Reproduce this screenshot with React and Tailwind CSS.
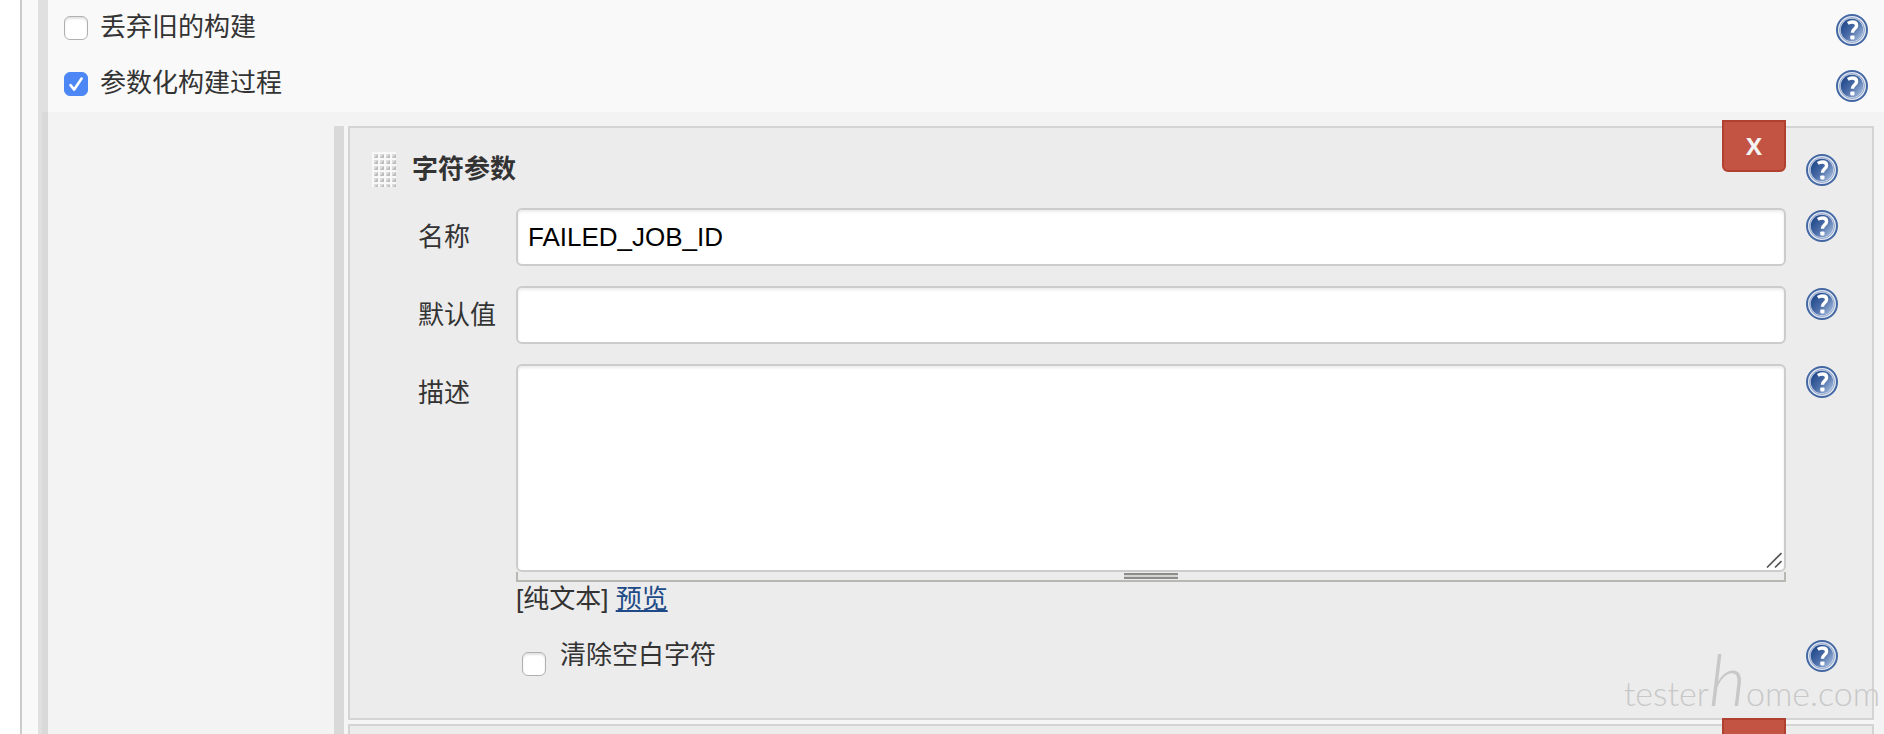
import { useState } from 'react'

function HelpIcon() {
  return (
    <svg viewBox="0 0 32 32" className="h-8 w-8" aria-hidden>
      <defs>
        <linearGradient id="helpFill" x1="0.1" y1="0.2" x2="0.9" y2="0.9">
          <stop stopColor="#234a8c" />
          <stop offset="0.5" stopColor="#4c6ea8" />
          <stop offset="1" stopColor="#a3bbdd" />
        </linearGradient>
      </defs>
      <circle cx="16" cy="16" r="15" fill="#e3e9f3" stroke="#4468a4" strokeWidth="2" />
      <circle cx="16" cy="16" r="12.400" fill="none" stroke="#8ba1c8" strokeWidth="1" />
      <circle cx="16" cy="16" r="11.300" fill="url(#helpFill)" />
      <path
        d="M11.800 9.400c1.400-.9 2.900-1.400 4.500-1.400 2.700 0 4.300 1.300 4.300 3.400 0 3.300-4.200 3.400-4.200 7.400"
        fill="none"
        stroke="#fff"
        strokeWidth="3.400"
      />
      <rect x="14.300" y="21.400" width="4.200" height="4" rx="0.800" fill="#fff" />
    </svg>
  )
}

function HelpButton({ label, className }) {
  return (
    <button type="button" aria-label={`帮助: ${label}`} className={`h-8 w-8 shrink-0 ${className}`}>
      <HelpIcon />
    </button>
  )
}

function Checkbox({ id, checked, onChange, className = '' }) {
  return (
    <span className={`relative h-6 w-6 shrink-0 ${className}`}>
      <input
        id={id}
        type="checkbox"
        checked={checked}
        onChange={(e) => onChange(e.target.checked)}
        className="peer block h-6 w-6 appearance-none rounded-md border border-[#b0b0b0] bg-white shadow-[inset_0_2px_2px_#e2e2e2] checked:border-[#4c87f5] checked:bg-[#4c87f5] checked:shadow-none"
      />
      <svg
        viewBox="0 0 24 24"
        className="pointer-events-none absolute inset-0 hidden h-6 w-6 peer-checked:block"
        fill="none"
        stroke="#fff"
        strokeWidth="2.600"
        strokeLinecap="round"
        strokeLinejoin="round"
        aria-hidden
      >
        <path d="M6.500 13.200 L10.200 17.600 L17.600 6.600" />
      </svg>
    </span>
  )
}

function OptionRow({ id, label, checked, onChange }) {
  return (
    <div className="flex h-14 items-start pr-4 pl-4">
      <Checkbox id={id} checked={checked} onChange={onChange} className="mt-4" />
      <label htmlFor={id} className="mt-2 ml-3 flex-1 leading-[38px]">
        {label}
      </label>
      <HelpButton label={label} className="mt-[14px]" />
    </div>
  )
}

function Field({ id, label, children }) {
  return (
    <div className="flex items-start">
      <label htmlFor={id} className="w-[98px] shrink-0 leading-[58px]">
        {label}
      </label>
      <div className="min-w-0 flex-1">{children}</div>
      <HelpButton label={label} className="mt-0.5 ml-5" />
    </div>
  )
}

function DragHandle() {
  return (
    <svg className="h-[35px] w-6 shrink-0" aria-hidden>
      <defs>
        <pattern id="gripDots" width="6" height="6" patternUnits="userSpaceOnUse">
          <rect width="6" height="6" fill="#f8f8f8" />
          <rect x="2" y="2" width="4" height="4" fill="#dcdcdc" />
          <path d="M2 6 L6 2 V6 Z" fill="#bdbdbd" />
        </pattern>
      </defs>
      <rect width="24" height="35" fill="url(#gripDots)" />
    </svg>
  )
}

function DeleteButton({ children }) {
  return (
    <button
      type="button"
      aria-label="删除"
      className="absolute -top-2 right-[86px] h-[52px] w-16 rounded-b-md border-2 border-[#b04030] bg-[#c35342] font-['Open_Sans',sans-serif] text-2xl font-bold text-[#f4f4f4]"
    >
      {children}
    </button>
  )
}

const inputClass =
  'block w-full rounded-md border-2 border-[#ccc] bg-white px-2.5 text-black shadow-[inset_0_2px_3px_#ececec] outline-none'

function StringParameter() {
  const [name, setName] = useState('FAILED_JOB_ID')
  const [value, setValue] = useState('')
  const [description, setDescription] = useState('')
  const [trim, setTrim] = useState(false)

  return (
    <section className="relative border-2 border-[#d4d4d4] bg-[#ececec] pr-[34px] pb-[42px]">
      <DeleteButton>X</DeleteButton>
      <div className="flex h-20 items-start pt-6 pl-[22px]">
        <DragHandle />
        <h2 className="ml-4 flex-1 leading-[34px] font-bold">字符参数</h2>
        <HelpButton label="字符参数" className="mt-0.5" />
      </div>

      <div className="flex flex-col gap-5 pl-[68px]">
        <Field id="name" label="名称">
          <input
            id="name"
            type="text"
            value={name}
            onChange={(e) => setName(e.target.value)}
            className={`h-[58px] ${inputClass}`}
          />
        </Field>
        <Field id="default" label="默认值">
          <input
            id="default"
            type="text"
            value={value}
            onChange={(e) => setValue(e.target.value)}
            className={`h-[58px] ${inputClass}`}
          />
        </Field>
        <Field id="description" label="描述">
          <div className="relative">
            <textarea
              id="description"
              value={description}
              onChange={(e) => setDescription(e.target.value)}
              className={`h-52 resize-none py-2 ${inputClass}`}
            />
            <svg
              viewBox="0 0 16 16"
              className="pointer-events-none absolute right-1 bottom-1 h-4 w-4"
              stroke="#555"
              strokeWidth="1.600"
              aria-hidden
            >
              <path d="M1 15.500 L15.500 1 M9 15.500 L15.500 9" />
            </svg>
          </div>
          {/* vertical resize bar */}
          <div className="flex h-2.5 justify-center border-2 border-t-0 border-[#b8b8b2] pt-px">
            <div className="h-1.5 w-[54px] border-y-2 border-[#8c8c8a] bg-[#d4d4d0]" />
          </div>
          <p className="leading-[34px]">
            [纯文本]{' '}
            <a href="#preview" className="text-[#204a87] underline">
              预览
            </a>
          </p>
        </Field>
        <div className="flex items-start pl-[104px]">
          <Checkbox id="trim" checked={trim} onChange={setTrim} className="mt-4" />
          <label htmlFor="trim" className="ml-[14px] flex-1 leading-[38px]">
            清除空白字符
          </label>
          <HelpButton label="清除空白字符" className="mt-1" />
        </div>
      </div>
    </section>
  )
}

export default function App() {
  const [discard, setDiscard] = useState(false)
  const [parametrized, setParametrized] = useState(true)

  return (
    <div className="relative h-screen overflow-hidden bg-white pl-5 font-['Liberation_Sans','Noto_Sans_CJK_SC',sans-serif] text-[26px] text-[#333]">
      <main className="min-h-full border-l-2 border-[#ccc] bg-[#f9f9f9] pl-4">
        <div className="border-l-10 border-[#e0e0e0]">
          <OptionRow id="discard" label="丢弃旧的构建" checked={discard} onChange={setDiscard} />
          <OptionRow
            id="parametrized"
            label="参数化构建过程"
            checked={parametrized}
            onChange={setParametrized}
          />
          <div className="relative -ml-1.5 border-l-6 border-[#d9d9d9] bg-[#f3f3f3] pt-[14px] pr-2.5 pl-[286px]">
            <div className="flex flex-col gap-1 border-l-10 border-[#d9d9d9] bg-[#f5f5f5] pl-1">
              <StringParameter />
              <section className="relative h-40 border-2 border-[#d4d4d4] bg-[#ececec]">
                <DeleteButton />
              </section>
            </div>
          </div>
        </div>
      </main>
      <div className="pointer-events-none absolute right-1 bottom-5 font-[Lato,sans-serif] text-[34px] leading-none font-light text-[#c8c8c8]">
        tester<span className="text-7xl leading-none font-light italic">h</span>ome.com
      </div>
    </div>
  )
}
